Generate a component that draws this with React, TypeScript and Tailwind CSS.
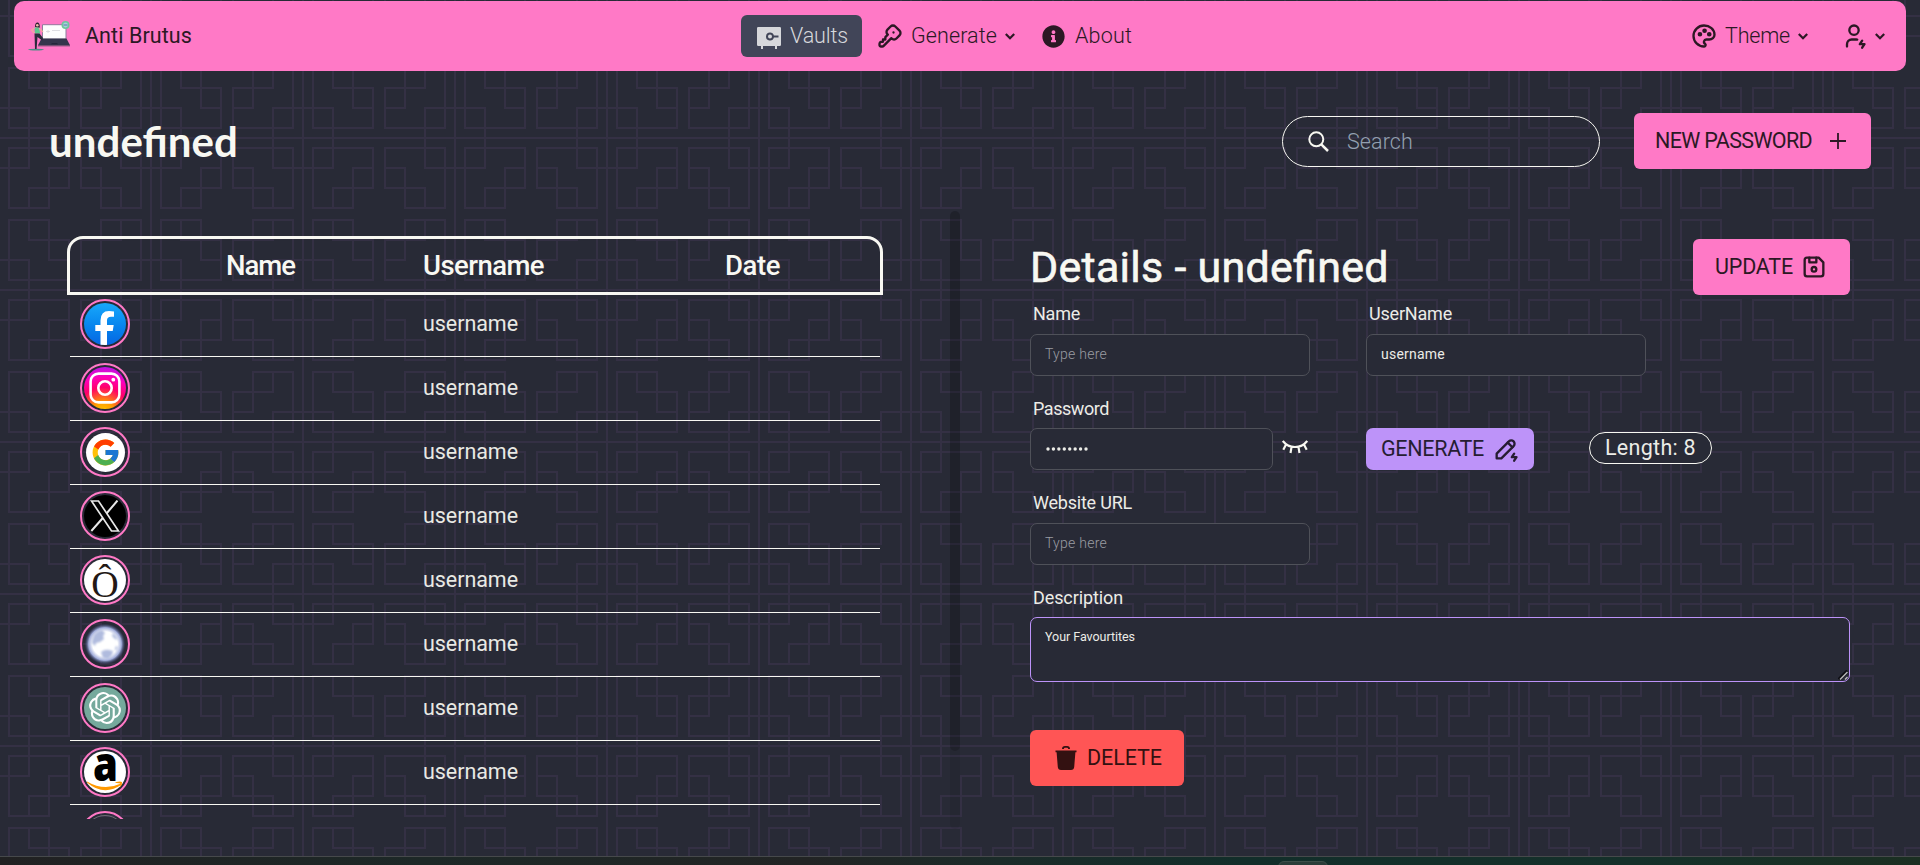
import { useLayoutEffect, useRef, useState } from "react";
import type { ReactNode } from "react";
import { TbKey, TbPalette, TbUserBolt, TbDeviceFloppy, TbPencilBolt } from "react-icons/tb";
import { FaInfoCircle } from "react-icons/fa";
import { FcGoogle } from "react-icons/fc";
import { SiOpenai } from "react-icons/si";

const TEMPLE =
  "M152 150v2H0v-2h28v-8H8v-20H0v-2h8V80h42v20h20v42H30v8h90v-8H80v-42h20V80h42v40h8V30h-8v40h-42V50H80V8h40V0h2v8h20v20h8V0h2v150zm-2 0v-28h-8v20h-20v8h28zM82 30v18h18V30H82zm20 18h20v20h18V30h-20V10H82v18h20v20zm0 2v18h18V50h-18zm20-22h18V10h-18v18zm-54 92v-18H50v18h18zm-20-18H28V82H10v38h20v20h38v-18H48v-20zm0-2V82H30v18h18zm-20 22H10v18h18v-18zm54 0v18h38v-20h20V82h-18v20h-20v20H82zm18-20H82v18h18v-18zm2-2h18V82h-18v18zm20 40v-18h18v18h-18zM30 0h-2v8H8v20H0v2h8v40h42V50h20V8H30V0zm20 48h18V30H50v18zm18-20H48v20H28v20H10V30h20V10h38v18zM30 50h18v18H30V50zm-2-40H10v18h18V10z";

function Backdrop() {
  return (
    <svg className="absolute inset-0 -z-10 h-full w-full" aria-hidden="true">
      <defs>
        <pattern id="temple" width="152" height="152" y="-13" patternUnits="userSpaceOnUse">
          <path d={TEMPLE} fill="#343044" fillRule="evenodd" />
        </pattern>
      </defs>
      <rect width="100%" height="100%" fill="url(#temple)" />
    </svg>
  );
}

/* Single-line text whose tracking is adjusted so that it fills its box. */
function Fit({ className, children }: { className: string; children: string }) {
  const box = useRef<HTMLDivElement>(null);
  const run = useRef<HTMLSpanElement>(null);
  const [tracking, setTracking] = useState(0);
  useLayoutEffect(() => {
    if (box.current && run.current) {
      const spare = box.current.clientWidth - run.current.getBoundingClientRect().width;
      setTracking(spare / children.length);
    }
  }, [children]);
  return (
    <div ref={box} className={`shrink-0 leading-[1.2] whitespace-nowrap ${className}`}>
      <span ref={run} style={{ letterSpacing: tracking }}>
        {children}
      </span>
    </div>
  );
}

function Chevron() {
  return (
    <svg width="10" height="7" viewBox="0 0 10 7" fill="none" stroke="currentColor" strokeWidth="2.200">
      <path d="M.8 1 5 5.200 9.200 1" />
    </svg>
  );
}

function Logo() {
  return (
    <svg width="42" height="30" viewBox="0 0 42 30">
      <ellipse cx="8" cy="28.600" rx="8" ry="0.800" fill="#4f8f86" />
      <rect x="14" y="3.200" width="24.500" height="15" rx="1" fill="#8d7f9c" />
      <rect x="15" y="4.200" width="22.500" height="13.500" fill="#fdfdfd" />
      <path d="M18 10.500h4M20 9v3M24 9.500h8" stroke="#d5d5da" strokeWidth=".8" />
      <path d="M13.500 17.500h25l3.500 6.800H10z" fill="#34354c" />
      <path d="M10 24.300h32v1H10z" fill="#55475f" />
      <path d="M24 22h5l1 1.200h-7z" fill="#24253a" />
      <circle cx="37.500" cy="4" r="4" fill="#6cc79d" />
      <circle cx="37.500" cy="4" r="2.400" fill="#a9cfd9" />
      <path d="M35.500 4h4" stroke="#5b7bb0" strokeWidth="1" />
      <path d="M7 6c0-3 1-4.400 2.400-4.400S12 3 11.700 7z" fill="#2c2430" />
      <circle cx="9.300" cy="4.300" r="1.300" fill="#f2b8a8" />
      <path d="M6.500 6.500h4.500l1.200 6H6.800z" fill="#5fc88f" />
      <path d="m6.500 7-3 2 3 3M11 7l4 4" stroke="#f2a8a0" strokeWidth="1.300" fill="none" />
      <path d="M6.500 12.500h5l3.500 4.500-.8 2.500-4.700-3.500-.9 12H7z" fill="#2b2a3c" />
    </svg>
  );
}

function Safe() {
  return (
    <svg width="24" height="22" viewBox="0 0 24 22">
      <path
        fill="currentColor"
        fillRule="evenodd"
        d="M1.200 0h21.600Q24 0 24 1.200v16.600q0 1.200-1.200 1.200H20v3h-2v-3H6v3H4v-3H1.200Q0 19 0 17.800V1.200Q0 0 1.200 0zM13 5.500a4 4 0 1 0 3.900 5H21.500v-2H16.900a4 4 0 0 0-3.900-3zm0 2a2 2 0 1 1 0 4 2 2 0 0 1 0-4z"
      />
    </svg>
  );
}

function Trash() {
  return (
    <svg width="22" height="24" viewBox="0 0 22 24" fill="currentColor">
      <path d="M7 2.900Q7 0 10 0h2q3 0 3 2.900h-1.800Q13 1.800 12 1.800h-2q-1 0-1.200 1.100z" />
      <path d="M.5 4.600h21v1.700h-1.100L19.200 21q-.3 3-3.200 3H6q-2.900 0-3.200-3L1.600 6.300H.5z" />
    </svg>
  );
}

function ClosedEye() {
  return (
    <svg width="26" height="14" viewBox="0 0 26 14" fill="none" stroke="currentColor" strokeWidth="2.200">
      <path d="M.8.900Q5.500 7 13 7T25.200.900M4.200 4.300 1.300 9.800M9.600 6.600 8.500 13M16.400 6.600 17.500 13M21.800 4.300l2.900 5.500" />
    </svg>
  );
}

function XMark() {
  return (
    <svg width="30" height="32" viewBox="0 0 30 32" fill="none" stroke="#e8e8e8" strokeWidth="1.500">
      <path d="M1.500 1h7l20 30h-7z" strokeWidth="1.700" />
      <path d="M27.500.5 16.500 13.500M12.800 18 1.300 31" strokeWidth="2" />
    </svg>
  );
}

function Globe() {
  return (
    <svg width="42" height="42" viewBox="0 0 42 42">
      <defs>
        <radialGradient id="halo">
          <stop offset=".6" stopColor="#ffffff" />
          <stop offset=".8" stopColor="#a3aedb" />
          <stop offset="1" stopColor="#39427a" stopOpacity="0" />
        </radialGradient>
        <filter id="soft">
          <feGaussianBlur stdDeviation=".8" />
        </filter>
      </defs>
      <circle cx="21" cy="21" r="20.500" fill="url(#halo)" />
      <g filter="url(#soft)" fill="#b0bbde">
        <path d="M10 12q3-4 8-5l3 3-2 3 1 3-4 3-4 1-1 3-3-3q0-4 2-8z" />
        <path d="M17 29q4-3 8-2l4 1-1 4-4 4-5-1-1-3z" />
        <path d="M29 10q4 3 5 7l-3-1-3-3zM32 23l2 1-2 4-1-2z" />
      </g>
    </svg>
  );
}

function Amazon() {
  return (
    <svg width="42" height="42" viewBox="0 0 42 42" className="overflow-visible">
      <text x="9" y="30" fontFamily="Open Sans" fontWeight="800" fontSize="47" textLength="25" lengthAdjust="spacingAndGlyphs">
        a
      </text>
      <path d="M3 30.500q17 10 34 2l1 .8Q20 46 3 31.500z" fill="#ff9900" />
      <path d="M31.500 31.200q4.500-1.200 6.500-.3.400 2.600-2 5.600.8-3 .3-4-1.500-.7-4.800-.5z" fill="#ff9900" />
    </svg>
  );
}

const ACCOUNTS: { id: string; user?: string; disc: string; mark: ReactNode }[] = [
  {
    id: "facebook",
    user: "username",
    disc: "size-[42px] items-end overflow-hidden bg-linear-to-b from-[#19a8fb] to-[#0866e2] text-white",
    mark: (
      <svg width="20" height="34" viewBox="0 0 20 34" fill="currentColor">
        <path d="M5.500 34V20H.3v-6h5.200v-4.500Q5.500 0 14 0q3 0 5 .4v5.300h-3q-4 0-4 3.500V14h6.700l-1 6H12v14z" />
      </svg>
    ),
  },
  {
    id: "instagram",
    user: "username",
    disc: "size-[42px] items-center bg-[radial-gradient(circle_at_45%_110%,#ffd000_0%,#ff9a00_22%,#ff0069_50%,#ff00b8_70%,#9a1bff_100%)]",
    mark: (
      <svg width="32" height="32" viewBox="0 0 32 32" fill="none" stroke="#fff" strokeWidth="2.600">
        <rect x="1.600" y="1.600" width="28.800" height="28.800" rx="8" />
        <circle cx="16" cy="16" r="6.700" />
        <circle cx="24.300" cy="7.700" r="1.900" fill="#fff" stroke="none" />
      </svg>
    ),
  },
  { id: "google", user: "username", disc: "size-[39px] items-center bg-white", mark: <FcGoogle size={31} /> },
  { id: "x", user: "username", disc: "size-[42px] items-center bg-black", mark: <XMark /> },
  {
    id: "o",
    user: "username",
    disc: "size-[42px] items-center bg-white",
    mark: (
      <svg width="42" height="42" viewBox="0 0 42 42" className="overflow-visible">
        <text x="21" y="37.500" textAnchor="middle" fontFamily="Liberation Serif" fontSize="38" fill="#231815">
          Ô
        </text>
      </svg>
    ),
  },
  { id: "globe", user: "username", disc: "size-[42px] items-center", mark: <Globe /> },
  { id: "openai", user: "username", disc: "size-[42px] items-center bg-[#75a99c] text-white", mark: <SiOpenai size={32} /> },
  { id: "amazon", user: "username", disc: "size-[42px] items-center bg-white", mark: <Amazon /> },
  { id: "more", disc: "size-[42px] items-center border border-[#6b6c72]", mark: null },
];

function Label({ className, children }: { className: string; children: string }) {
  return (
    <div className="flex h-[40px] items-center pl-[3px]">
      <Fit className={`text-lg ${className}`}>{children}</Fit>
    </div>
  );
}

const FIELD = "flex h-[42px] items-center rounded-[7px] border border-[#4f5159] bg-[#282a36] px-[14px] pb-px";

export default function App() {
  return (
    <div className="relative isolate flex h-[865px] w-full flex-col overflow-hidden bg-[#282a36] font-['Roboto',sans-serif] text-[21.5px] text-[#f8f8f2]">
      <Backdrop />

      <nav className="mx-[14px] mt-px flex h-[70px] shrink-0 items-center rounded-[10px] bg-[#ff79c6] text-[#2c1824]">
        <div className="flex w-[727px] items-center gap-[15px] pl-[14px]">
          <Logo />
          <Fit className="w-[107px]">Anti Brutus</Fit>
        </div>
        <div className="flex flex-1 items-center font-light">
          <div className="flex h-[42px] w-[121px] items-center gap-[9px] rounded-md bg-[#414558] pl-4 text-[#d6d7db]">
            <div className="pt-1">
              <Safe />
            </div>
            <Fit className="w-[58px]">Vaults</Fit>
          </div>
          <TbKey size={28} className="ml-[14px]" />
          <Fit className="ml-[7px] w-[86px]">Generate</Fit>
          <div className="ml-[8px]">
            <Chevron />
          </div>
          <FaInfoCircle size={23} className="ml-[27px]" />
          <Fit className="ml-[10px] w-[57px]">About</Fit>
        </div>
        <div className="flex items-center pr-[21px] font-light">
          <TbPalette size={28} />
          <Fit className="ml-[7px] w-[65px]">Theme</Fit>
          <div className="ml-[8px]">
            <Chevron />
          </div>
          <TbUserBolt size={28} className="ml-[32px]" />
          <div className="ml-[7px]">
            <Chevron />
          </div>
        </div>
      </nav>

      <header className="flex h-[140px] shrink-0 items-center pr-[49px] pl-[49px]">
        <h1 className="flex-1 font-['Lato',sans-serif] font-bold">
          <Fit className="w-[189px] text-[42px] [font-feature-settings:'liga'_1]">undefined</Fit>
        </h1>
        <div className="mr-[34px] flex h-[51px] w-[318px] items-center rounded-full border border-[#f8f8f2] pl-[25px]">
          <svg width="21" height="21" viewBox="0 0 21 21" fill="none" stroke="currentColor" strokeWidth="2">
            <circle cx="8.300" cy="8.300" r="7" />
            <path d="m13.300 13.300 6.700 6.700" strokeWidth="2.500" />
          </svg>
          <Fit className="ml-[18px] w-[66px] pt-[2px] font-light text-[#93a0b0]">Search</Fit>
        </div>
        <button className="flex h-14 w-[237px] items-center rounded-md bg-[#ff79c6] pl-[21px] text-[#2c1824]">
          <Fit className="w-[157px] text-left">NEW PASSWORD</Fit>
          <svg width="16" height="16" viewBox="0 0 16 16" stroke="currentColor" strokeWidth="1.800" className="ml-[18px]">
            <path d="M8 0v16M0 8h16" />
          </svg>
        </button>
      </header>

      <main className="flex h-[645px] shrink-0">
        <section className="w-[950px] pt-[25px] pl-[67px]">
          <div className="h-[583px] overflow-hidden">
            <div className="flex h-[59px] w-[816px] items-center rounded-t-[16px] border-[3px] border-[#f8f8f2] pb-px text-[27.5px] font-medium">
              <Fit className="ml-[156px] w-[69px]">Name</Fit>
              <Fit className="ml-[128px] w-[121px]">Username</Fit>
              <Fit className="ml-[181px] w-[55px]">Date</Fit>
            </div>
            <ul className="-mt-[2px] ml-[3px] w-[810px]">
              {ACCOUNTS.map((a) => (
                <li key={a.id} className="flex h-16 items-center border-b border-[#f8f8f2] pl-[10px]">
                  <div className="mb-px flex size-[50px] items-center justify-center rounded-full border-2 border-[#ff79c6]">
                    <div className={`flex justify-center rounded-full ${a.disc}`}>{a.mark}</div>
                  </div>
                  {a.user && <Fit className="mb-px ml-[293px] w-[95px] text-[#e9e9e4]">{a.user}</Fit>}
                </li>
              ))}
            </ul>
          </div>
        </section>

        <div className="h-[618px] w-[10px] shrink-0 rounded-[5px] bg-black/6">
          <div className="h-[540px] rounded-[5px] bg-black/15" />
        </div>

        <section className="w-[890px] pt-[28px] pl-[70px] text-[#ecece7]">
          <div className="flex h-[56px] items-center justify-between text-[#f8f8f2]">
            <Fit className="w-[359px] pt-px text-[43px] [-webkit-text-stroke:0.6px_#f8f8f2] [font-feature-settings:'liga'_1]">
              Details - undefined
            </Fit>
            <button className="flex h-14 w-[157px] items-center gap-[7px] rounded-md bg-[#ff79c6] pl-[22px] text-[#2c1824]">
              <Fit className="w-[78px] text-left">UPDATE</Fit>
              <TbDeviceFloppy size={28} />
            </button>
          </div>
          <div className="-mt-px grid grid-cols-[336px_280px]">
            <div>
              <Label className="w-[47px]">Name</Label>
              <div className={`${FIELD} w-[280px] text-[14px] font-light text-[#9a9ca3]`}>
                <Fit className="w-[62px]">Type here</Fit>
              </div>
            </div>
            <div>
              <Label className="w-[83px]">UserName</Label>
              <div className={`${FIELD} w-[280px] text-[14px]`}>
                <Fit className="w-[64px]">username</Fit>
              </div>
            </div>
          </div>
          <div className="pt-[13px]">
            <Label className="w-[76px]">Password</Label>
          </div>
          <div className="-mt-px flex items-center">
            <div className={`${FIELD} w-[243px]`}>
              <svg width="43" height="4" viewBox="0 0 43 4" fill="currentColor" className="ml-px">
                {[0, 1, 2, 3, 4, 5, 6, 7].map((i) => (
                  <circle key={i} cx={2 + i * 5.43} cy="2" r="1.700" />
                ))}
              </svg>
            </div>
            <div className="ml-[9px] pb-[5px] text-[#f8f8f2]">
              <ClosedEye />
            </div>
            <button className="ml-[58px] flex h-[42px] w-[168px] items-center gap-[8px] rounded-[7px] bg-[#bd93f9] pl-[15px] text-[#261d32]">
              <Fit className="w-[103px] text-left">GENERATE</Fit>
              <TbPencilBolt size={28} />
            </button>
            <div className="mb-[2px] ml-[55px] flex h-8 w-[123px] items-center rounded-full border border-[#f8f8f2] bg-[#282a36] pl-[15px]">
              <Fit className="w-[91px]">Length: 8</Fit>
            </div>
          </div>
          <div className="pt-[13px]">
            <Label className="w-[99px]">Website URL</Label>
          </div>
          <div className={`${FIELD} w-[280px] text-[14px] font-light text-[#9a9ca3]`}>
            <Fit className="w-[62px]">Type here</Fit>
          </div>
          <div className="pt-[13px]">
            <Label className="w-[90px]">Description</Label>
          </div>
          <div className="relative -mt-px h-[65px] w-[820px] rounded-[7px] border border-[#bd93f9] bg-[#282a36] px-[14px] pt-[11px]">
            <Fit className="w-[90px] text-[12.5px]">Your Favourtites</Fit>
            <svg width="10" height="10" viewBox="0 0 10 10" className="absolute right-[1px] bottom-[1px]" stroke="#b8b8b8" strokeWidth="1.500">
              <path d="M1 9.500 9.500 1" stroke="#0d0d12" strokeWidth="3.500" />
              <path d="M2 9.500 9.500 2M7 9.500 9.500 7" />
            </svg>
          </div>
          <button className="mt-12 flex h-14 w-[154px] items-center gap-[10px] rounded-md bg-[#ff5555] pl-[25px] text-[#331111]">
            <Trash />
            <Fit className="w-[75px] text-left">DELETE</Fit>
          </button>
        </section>
      </main>

      <footer className="flex h-[9px] shrink-0 border-t border-[#46494b] bg-[linear-gradient(90deg,#212122,#1d2827_22%,#222424_42%,#1b2b29_52%,#122e2a_65%,#15302a_85%,#1b2f22)] pt-1 pl-[1278px]">
        <div className="h-[10px] w-[50px] rounded-t-md border border-[#3d4f4a] bg-[#2a3d39]" />
      </footer>
    </div>
  );
}
